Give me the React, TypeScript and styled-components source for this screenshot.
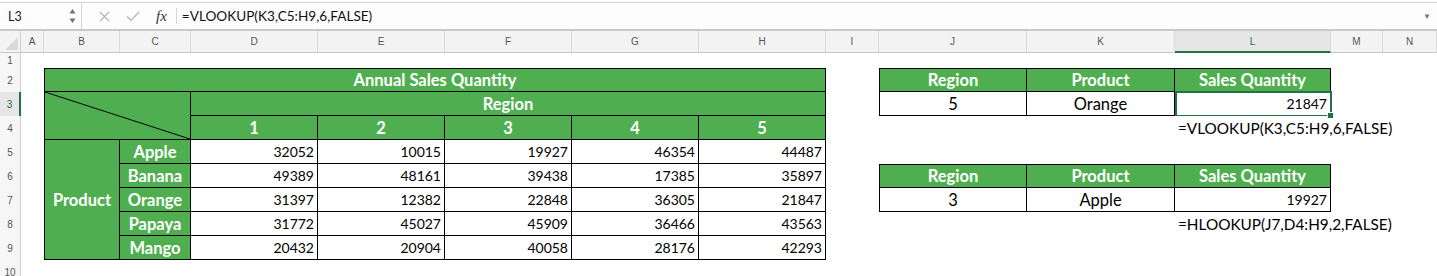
import React from 'react';
import styled, { createGlobalStyle, css } from 'styled-components';

const GREEN = '#4faf50';
const SELECT = '#217346';

const GlobalStyle = createGlobalStyle`
  body {
    margin: 0;
    background: #fff;
    font-family: Lato, "Open Sans", sans-serif;
  }
`

const Window = styled.div`
  display: flex;
  flex-direction: column;
  width: 1437px;
  height: 276px;
  overflow: hidden;
  background: #fff;
`

const FormulaBar = styled.div`
  display: flex;
  align-items: stretch;
  height: 26px;
  margin-top: 2px;
  border-top: 1px solid #d4d4d4;
  border-bottom: 1px solid #c9c9c9;
  background: #fdfdfd;
`

const BarGap = styled.div`
  height: 1px;
  background: #fff;
  border-bottom: 1px solid #c9c9c9;
`

const NameBox = styled.div`
  display: flex;
  align-items: center;
  justify-content: space-between;
  width: 82px;
  padding: 0 5px 0 8px;
  box-sizing: border-box;
  border-right: 1px solid #d6d6d6;
  font-size: 12.5px;
  color: #222;
`

const Tools = styled.div`
  display: flex;
  align-items: center;
  gap: 16px;
  padding: 0 9px 0 17px;
`

const Fx = styled.span`
  font-family: "Liberation Serif", serif;
  font-style: italic;
  font-size: 15px;
  color: #333;
`

const FormulaText = styled.div`
  flex: 1;
  display: flex;
  align-items: center;
  padding-left: 5px;
  border-left: 1px solid #d6d6d6;
  margin: 5px 0;
  font-size: 13.6px;
  color: #111;
`

const DropArrow = styled.div`
  display: flex;
  align-items: center;
  padding: 0 6px 0 10px;
  font-size: 8px;
  color: #777;
`

const Sheet = styled.div`
  display: grid;
  grid-template-columns: 21px 23px 76px 71px 127px 127px 127px 127px 127px 53px 148px 148px 156px 52px 1fr;
  grid-template-rows: 22px 15px repeat(8, 24px) 24px;
`

const headText = css`
  display: flex;
  align-items: center;
  justify-content: center;
  font-family: "Liberation Sans", Arial, sans-serif;
  font-size: 10px;
  color: #555;
  box-sizing: border-box;
`

const Corner = styled.div`
  ${headText};
  background: #f3f3f3;
  border-right: 1px solid #d0d0d0;
  border-bottom: 1px solid #c6c6c6;
  align-items: flex-end;
  justify-content: flex-end;
  padding: 0 2px 2px 0;
`

const ColHead = styled.div<{ $active?: boolean }>`
  ${headText};
  background: ${({ $active }) => ($active ? '#e6e6e6' : '#f3f3f3')};
  border-right: 1px solid #dadada;
  border-bottom: ${({ $active }) => ($active ? `2px solid ${SELECT}` : '1px solid #c6c6c6')};
  color: ${({ $active }) => ($active ? SELECT : '#555')};
`

const RowHead = styled.div<{ $active?: boolean }>`
  ${headText};
  grid-column: 1;
  background: ${({ $active }) => ($active ? '#e6e6e6' : '#f6f6f6')};
  border-right: ${({ $active }) => ($active ? `2px solid ${SELECT}` : '1px solid #d0d0d0')};
  color: ${({ $active }) => ($active ? SELECT : '#555')};
`

type Kind = 'head' | 'body' | 'note';

const Cell = styled.div<{
  $c: string;
  $r: string;
  $kind: Kind;
  $num?: boolean;
  $align?: 'left' | 'center' | 'right';
  $l?: boolean;
  $t?: boolean;
  $sel?: boolean;
}>`
  grid-column: ${({ $c }) => $c};
  grid-row: ${({ $r }) => $r};
  position: relative;
  display: flex;
  align-items: center;
  justify-content: ${({ $align }) =>
    $align === 'right' ? 'flex-end' : $align === 'left' ? 'flex-start' : 'center'};
  box-sizing: border-box;
  padding: 0 3px;
  font-size: ${({ $kind, $num }) => ($num ? '14px' : $kind === 'note' ? '15.3px' : '16.5px')};
  white-space: nowrap;
  color: ${({ $kind }) => ($kind === 'head' ? '#fff' : '#000')};
  font-weight: ${({ $kind }) => ($kind === 'head' ? 700 : 400)};
  background: ${({ $kind }) => ($kind === 'head' ? GREEN : '#fff')};
  ${({ $kind, $l, $t }) =>
    $kind !== 'note' &&
    css`
      border-right: 1px solid #000;
      border-bottom: 1px solid #000;
      ${$l && 'border-left: 1px solid #000;'}
      ${$t && 'border-top: 1px solid #000;'}
    `}
  ${({ $sel }) =>
    $sel &&
    css`
      &::after {
        content: '';
        position: absolute;
        top: -1px;
        left: 0;
        right: -2px;
        bottom: -2px;
        border: 2px solid ${SELECT};
      }
      &::before {
        content: '';
        position: absolute;
        right: -4px;
        bottom: -4px;
        width: 5px;
        height: 5px;
        background: ${SELECT};
        border: 1px solid #fff;
        z-index: 1;
      }
    `}
`

const Diagonal = styled.svg`
  display: block;
  width: calc(100% + 6px);
  height: 100%;
  margin: 0 -3px;
`

const cols = ['A', 'B', 'C', 'D', 'E', 'F', 'G', 'H', 'I', 'J', 'K', 'L', 'M', 'N'];
const colNums = ['D', 'E', 'F', 'G', 'H'];

const sales: [string, number[]][] = [
  ['Apple', [32052, 10015, 19927, 46354, 44487]],
  ['Banana', [49389, 48161, 39438, 17385, 35897]],
  ['Orange', [31397, 12382, 22848, 36305, 21847]],
  ['Papaya', [31772, 45027, 45909, 36466, 43563]],
  ['Mango', [20432, 20904, 40058, 28176, 42293]],
];

// sheet column letter -> grid column line
const gc = (letter: string) => cols.indexOf(letter) + 2;
// sheet row number -> grid row line
const gr = (n: number) => n + 1;

const LookupTable = ({ row, region, product, qty, formula, selected }: {
  row: number; region: string; product: string; qty: string; formula: string; selected?: boolean;
}) => (
  <>
    <Cell $c={`${gc('J')}`} $r={`${gr(row)}`} $kind="head" $l $t>Region</Cell>
    <Cell $c={`${gc('K')}`} $r={`${gr(row)}`} $kind="head" $t>Product</Cell>
    <Cell $c={`${gc('L')}`} $r={`${gr(row)}`} $kind="head" $t>Sales Quantity</Cell>
    <Cell $c={`${gc('J')}`} $r={`${gr(row + 1)}`} $kind="body" $l>{region}</Cell>
    <Cell $c={`${gc('K')}`} $r={`${gr(row + 1)}`} $kind="body">{product}</Cell>
    <Cell $c={`${gc('L')}`} $r={`${gr(row + 1)}`} $kind="body" $num $align="right" $sel={selected}>{qty}</Cell>
    <Cell $c={`${gc('L')} / -1`} $r={`${gr(row + 2)}`} $kind="note" $align="left">{formula}</Cell>
  </>
);

const App = () => {
  return (<Window>
    <GlobalStyle/>
    <FormulaBar>
      <NameBox>
        L3
        <svg width="7" height="16" viewBox="0 0 7 16">
          <path d="M3.5 1 L6.5 5.5 L0.5 5.5 Z" fill="#6f6f6f"/>
          <path d="M3.5 15 L6.5 10.5 L0.5 10.5 Z" fill="#6f6f6f"/>
        </svg>
      </NameBox>
      <Tools>
        <svg width="11" height="11" viewBox="0 0 11 11">
          <path d="M1 1 L10 10 M10 1 L1 10" stroke="#b4b4b4" strokeWidth="1.2"/>
        </svg>
        <svg width="14" height="11" viewBox="0 0 14 11">
          <path d="M1 5.5 L5 9.5 L13 1" stroke="#b4b4b4" strokeWidth="1.2" fill="none"/>
        </svg>
        <Fx>fx</Fx>
      </Tools>
      <FormulaText>=VLOOKUP(K3,C5:H9,6,FALSE)</FormulaText>
      <DropArrow>▼</DropArrow>
    </FormulaBar>
    <BarGap/>
    <Sheet>
      <Corner>
        <svg width="13" height="13" viewBox="0 0 13 13">
          <path d="M13 0 L13 13 L0 13 Z" fill="#d9d9d9"/>
        </svg>
      </Corner>
      {cols.map(c => <ColHead key={c} $active={c === 'L'}>{c}</ColHead>)}
      {Array.from({ length: 10 }, (_, i) => (
        <RowHead key={i} $active={i === 2} style={{ gridRow: gr(i + 1) }}>{i + 1}</RowHead>
      ))}

      <Cell $c={`${gc('B')} / ${gc('I')}`} $r={`${gr(2)}`} $kind="head" $l $t>Annual Sales Quantity</Cell>
      <Cell $c={`${gc('B')} / ${gc('D')}`} $r={`${gr(3)} / ${gr(5)}`} $kind="head" $l>
        <Diagonal viewBox="0 0 100 100" preserveAspectRatio="none">
          <line x1="0" y1="0" x2="100" y2="100" stroke="#000" strokeWidth="1" vectorEffect="non-scaling-stroke"/>
        </Diagonal>
      </Cell>
      <Cell $c={`${gc('D')} / ${gc('I')}`} $r={`${gr(3)}`} $kind="head">Region</Cell>
      {colNums.map((c, i) => (
        <Cell key={c} $c={`${gc(c)}`} $r={`${gr(4)}`} $kind="head">{i + 1}</Cell>
      ))}
      <Cell $c={`${gc('B')}`} $r={`${gr(5)} / ${gr(10)}`} $kind="head" $l>Product</Cell>
      {sales.map(([fruit, values], i) => (
        <React.Fragment key={fruit}>
          <Cell $c={`${gc('C')}`} $r={`${gr(5 + i)}`} $kind="head">{fruit}</Cell>
          {values.map((v, j) => (
            <Cell key={j} $c={`${gc(colNums[j])}`} $r={`${gr(5 + i)}`} $kind="body" $num $align="right">{v}</Cell>
          ))}
        </React.Fragment>
      ))}

      <LookupTable row={2} region="5" product="Orange" qty="21847" formula="=VLOOKUP(K3,C5:H9,6,FALSE)" selected/>
      <LookupTable row={6} region="3" product="Apple" qty="19927" formula="=HLOOKUP(J7,D4:H9,2,FALSE)"/>
    </Sheet>
  </Window>);
}

export default App;
